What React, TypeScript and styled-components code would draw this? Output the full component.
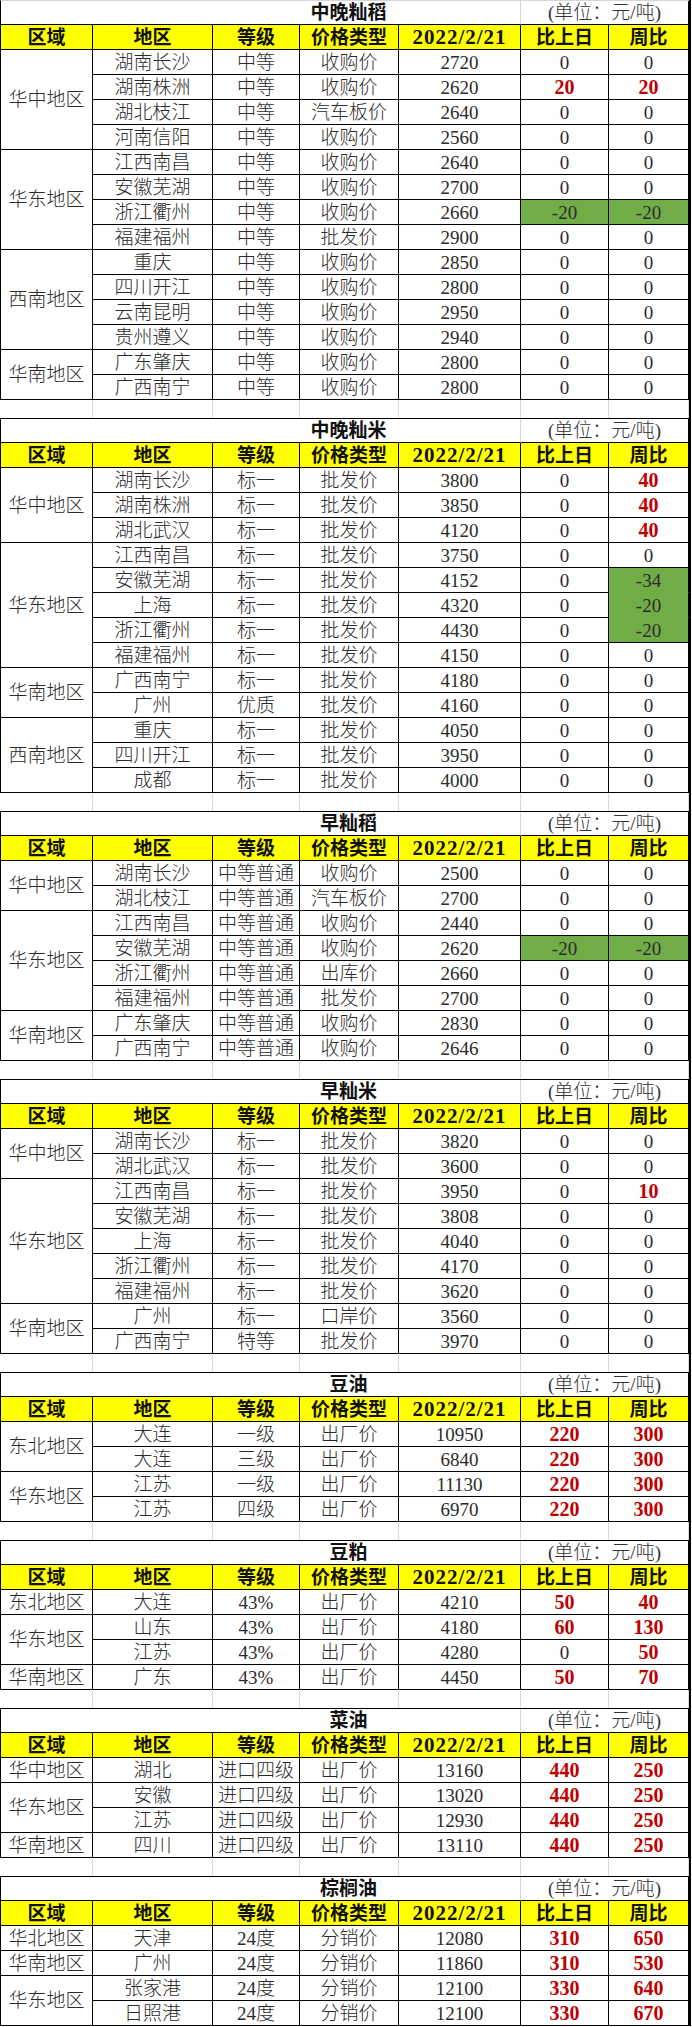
import React from "react";
import styled, { createGlobalStyle } from "styled-components";

type Quote = {
  area: string;
  grade: string;
  kind: string;
  price: string;
  day: number;
  week: number;
};

type Group = {
  region: string;
  rows: Quote[];
};

type Board = {
  title: string;
  groups: Group[];
};

const q = (area: string, grade: string, kind: string, price: string, day = 0, week = 0): Quote => ({
  area,
  grade,
  kind,
  price,
  day,
  week,
});

const boards: Board[] = [
  {
    title: "中晚籼稻",
    groups: [
      {
        region: "华中地区",
        rows: [
          q("湖南长沙", "中等", "收购价", "2720"),
          q("湖南株洲", "中等", "收购价", "2620", 20, 20),
          q("湖北枝江", "中等", "汽车板价", "2640"),
          q("河南信阳", "中等", "收购价", "2560"),
        ],
      },
      {
        region: "华东地区",
        rows: [
          q("江西南昌", "中等", "收购价", "2640"),
          q("安徽芜湖", "中等", "收购价", "2700"),
          q("浙江衢州", "中等", "收购价", "2660", -20, -20),
          q("福建福州", "中等", "批发价", "2900"),
        ],
      },
      {
        region: "西南地区",
        rows: [
          q("重庆", "中等", "收购价", "2850"),
          q("四川开江", "中等", "收购价", "2800"),
          q("云南昆明", "中等", "收购价", "2950"),
          q("贵州遵义", "中等", "收购价", "2940"),
        ],
      },
      {
        region: "华南地区",
        rows: [
          q("广东肇庆", "中等", "收购价", "2800"),
          q("广西南宁", "中等", "收购价", "2800"),
        ],
      },
    ],
  },
  {
    title: "中晚籼米",
    groups: [
      {
        region: "华中地区",
        rows: [
          q("湖南长沙", "标一", "批发价", "3800", 0, 40),
          q("湖南株洲", "标一", "批发价", "3850", 0, 40),
          q("湖北武汉", "标一", "批发价", "4120", 0, 40),
        ],
      },
      {
        region: "华东地区",
        rows: [
          q("江西南昌", "标一", "批发价", "3750"),
          q("安徽芜湖", "标一", "批发价", "4152", 0, -34),
          q("上海", "标一", "批发价", "4320", 0, -20),
          q("浙江衢州", "标一", "批发价", "4430", 0, -20),
          q("福建福州", "标一", "批发价", "4150"),
        ],
      },
      {
        region: "华南地区",
        rows: [
          q("广西南宁", "标一", "批发价", "4180"),
          q("广州", "优质", "批发价", "4160"),
        ],
      },
      {
        region: "西南地区",
        rows: [
          q("重庆", "标一", "批发价", "4050"),
          q("四川开江", "标一", "批发价", "3950"),
          q("成都", "标一", "批发价", "4000"),
        ],
      },
    ],
  },
  {
    title: "早籼稻",
    groups: [
      {
        region: "华中地区",
        rows: [
          q("湖南长沙", "中等普通", "收购价", "2500"),
          q("湖北枝江", "中等普通", "汽车板价", "2700"),
        ],
      },
      {
        region: "华东地区",
        rows: [
          q("江西南昌", "中等普通", "收购价", "2440"),
          q("安徽芜湖", "中等普通", "收购价", "2620", -20, -20),
          q("浙江衢州", "中等普通", "出库价", "2660"),
          q("福建福州", "中等普通", "批发价", "2700"),
        ],
      },
      {
        region: "华南地区",
        rows: [
          q("广东肇庆", "中等普通", "收购价", "2830"),
          q("广西南宁", "中等普通", "收购价", "2646"),
        ],
      },
    ],
  },
  {
    title: "早籼米",
    groups: [
      {
        region: "华中地区",
        rows: [
          q("湖南长沙", "标一", "批发价", "3820"),
          q("湖北武汉", "标一", "批发价", "3600"),
        ],
      },
      {
        region: "华东地区",
        rows: [
          q("江西南昌", "标一", "批发价", "3950", 0, 10),
          q("安徽芜湖", "标一", "批发价", "3808"),
          q("上海", "标一", "批发价", "4040"),
          q("浙江衢州", "标一", "批发价", "4170"),
          q("福建福州", "标一", "批发价", "3620"),
        ],
      },
      {
        region: "华南地区",
        rows: [
          q("广州", "标一", "口岸价", "3560"),
          q("广西南宁", "特等", "批发价", "3970"),
        ],
      },
    ],
  },
  {
    title: "豆油",
    groups: [
      {
        region: "东北地区",
        rows: [
          q("大连", "一级", "出厂价", "10950", 220, 300),
          q("大连", "三级", "出厂价", "6840", 220, 300),
        ],
      },
      {
        region: "华东地区",
        rows: [
          q("江苏", "一级", "出厂价", "11130", 220, 300),
          q("江苏", "四级", "出厂价", "6970", 220, 300),
        ],
      },
    ],
  },
  {
    title: "豆粕",
    groups: [
      { region: "东北地区", rows: [q("大连", "43%", "出厂价", "4210", 50, 40)] },
      {
        region: "华东地区",
        rows: [
          q("山东", "43%", "出厂价", "4180", 60, 130),
          q("江苏", "43%", "出厂价", "4280", 0, 50),
        ],
      },
      { region: "华南地区", rows: [q("广东", "43%", "出厂价", "4450", 50, 70)] },
    ],
  },
  {
    title: "菜油",
    groups: [
      { region: "华中地区", rows: [q("湖北", "进口四级", "出厂价", "13160", 440, 250)] },
      {
        region: "华东地区",
        rows: [
          q("安徽", "进口四级", "出厂价", "13020", 440, 250),
          q("江苏", "进口四级", "出厂价", "12930", 440, 250),
        ],
      },
      { region: "华南地区", rows: [q("四川", "进口四级", "出厂价", "13110", 440, 250)] },
    ],
  },
  {
    title: "棕榈油",
    groups: [
      { region: "华北地区", rows: [q("天津", "24度", "分销价", "12080", 310, 650)] },
      { region: "华南地区", rows: [q("广州", "24度", "分销价", "11860", 310, 530)] },
      {
        region: "华东地区",
        rows: [
          q("张家港", "24度", "分销价", "12100", 330, 640),
          q("日照港", "24度", "分销价", "12100", 330, 670),
        ],
      },
    ],
  },
];

const headings = ["区域", "地区", "等级", "价格类型", "2022/2/21", "比上日", "周比"];

type Tone = "up" | "down" | "flat";

const toneOf = (v: number): Tone => (v > 0 ? "up" : v < 0 ? "down" : "flat");

export default function App() {
  return (
    <>
      <GlobalStyle />
      <Page>
        {boards.map((board, bi) => {
          const flat = board.groups.flatMap((g) => g.rows);
          return (
            <React.Fragment key={board.title}>
              <Sheet $first={bi === 0}>
                <TitleCell>{board.title}</TitleCell>
                <UnitCell>(单位：元/吨)</UnitCell>
                {headings.map((h) => (
                  <HeadCell key={h} $date={h.startsWith("2022")}>
                    {h}
                  </HeadCell>
                ))}
                {board.groups.map((group) => (
                  <React.Fragment key={group.region + group.rows[0].area}>
                    <RegionCell $span={group.rows.length}>{group.region}</RegionCell>
                    {group.rows.map((row) => {
                      const idx = flat.indexOf(row);
                      const next = flat[idx + 1];
                      return (
                        <React.Fragment key={row.area + row.grade + row.price}>
                          <Cell>{row.area}</Cell>
                          <Cell>{row.grade}</Cell>
                          <Cell>{row.kind}</Cell>
                          <Cell>{row.price}</Cell>
                          <ValueCell
                            $tone={toneOf(row.day)}
                            $joined={row.day < 0 && !!next && next.day < 0}
                          >
                            {row.day}
                          </ValueCell>
                          <ValueCell
                            $tone={toneOf(row.week)}
                            $joined={row.week < 0 && !!next && next.week < 0}
                          >
                            {row.week}
                          </ValueCell>
                        </React.Fragment>
                      );
                    })}
                  </React.Fragment>
                ))}
              </Sheet>
              {bi < boards.length - 1 && (
                <Spacer>
                  {headings.map((h) => (
                    <SpacerCell key={h} />
                  ))}
                </Spacer>
              )}
            </React.Fragment>
          );
        })}
      </Page>
    </>
  );
}

const GlobalStyle = createGlobalStyle`
  html, body {
    margin: 0;
    padding: 0;
    background: #ffffff;
  }
  body {
    font-family: "Liberation Serif", "Noto Sans CJK SC", serif;
  }
`;

const GREEN = "#70ad47";

const Page = styled.div`
  width: 689px;
  display: flex;
  flex-direction: column;
  border-right: 2px solid #000000;
  background: #ffffff;
`;

const Sheet = styled.div<{ $first?: boolean }>`
  display: grid;
  grid-template-columns: 92px 120px 87px 99px 122px 88px 80px;
  grid-template-rows: 24px;
  grid-auto-rows: 25px;
  border-top: 1px solid ${(p) => (p.$first ? "#d6d6d6" : "#000000")};
  border-left: 1px solid #000000;
`;

const Cell = styled.div`
  box-sizing: border-box;
  display: flex;
  align-items: center;
  justify-content: center;
  border-right: 1px solid #000000;
  border-bottom: 1px solid #000000;
  color: #2b2b2b;
  font-size: 19px;
  font-weight: 300;
  line-height: 1;
  white-space: nowrap;
  overflow: hidden;
`;

const TitleCell = styled(Cell)`
  grid-column: 1 / 6;
  padding-left: 176px;
  border-right-color: #d6d6d6;
  color: #111111;
  font-weight: 700;
`;

const UnitCell = styled(Cell)`
  grid-column: 6 / 8;
  color: #333333;
`;

const HeadCell = styled(Cell)<{ $date?: boolean }>`
  background: #ffff00;
  color: #111111;
  font-weight: 700;
  font-size: ${(p) => (p.$date ? "21px" : "19px")};
  letter-spacing: ${(p) => (p.$date ? "1px" : "0")};
`;

const RegionCell = styled(Cell)<{ $span: number }>`
  grid-column: 1;
  grid-row: span ${(p) => p.$span};
`;

const ValueCell = styled(Cell)<{ $tone: Tone; $joined?: boolean }>`
  background: ${(p) => (p.$tone === "down" ? GREEN : "transparent")};
  border-bottom-color: ${(p) => (p.$joined ? GREEN : "#000000")};
  color: ${(p) => (p.$tone === "up" ? "#c00000" : "#2b2b2b")};
  font-weight: ${(p) => (p.$tone === "up" ? 700 : 300)};
  font-size: ${(p) => (p.$tone === "up" ? "20px" : "19px")};
`;

const Spacer = styled.div`
  display: grid;
  grid-template-columns: 93px 120px 87px 99px 122px 88px 80px;
  height: 18px;
`;

const SpacerCell = styled.div`
  box-sizing: border-box;
  border-right: 1px solid #d9d9d9;
`;
